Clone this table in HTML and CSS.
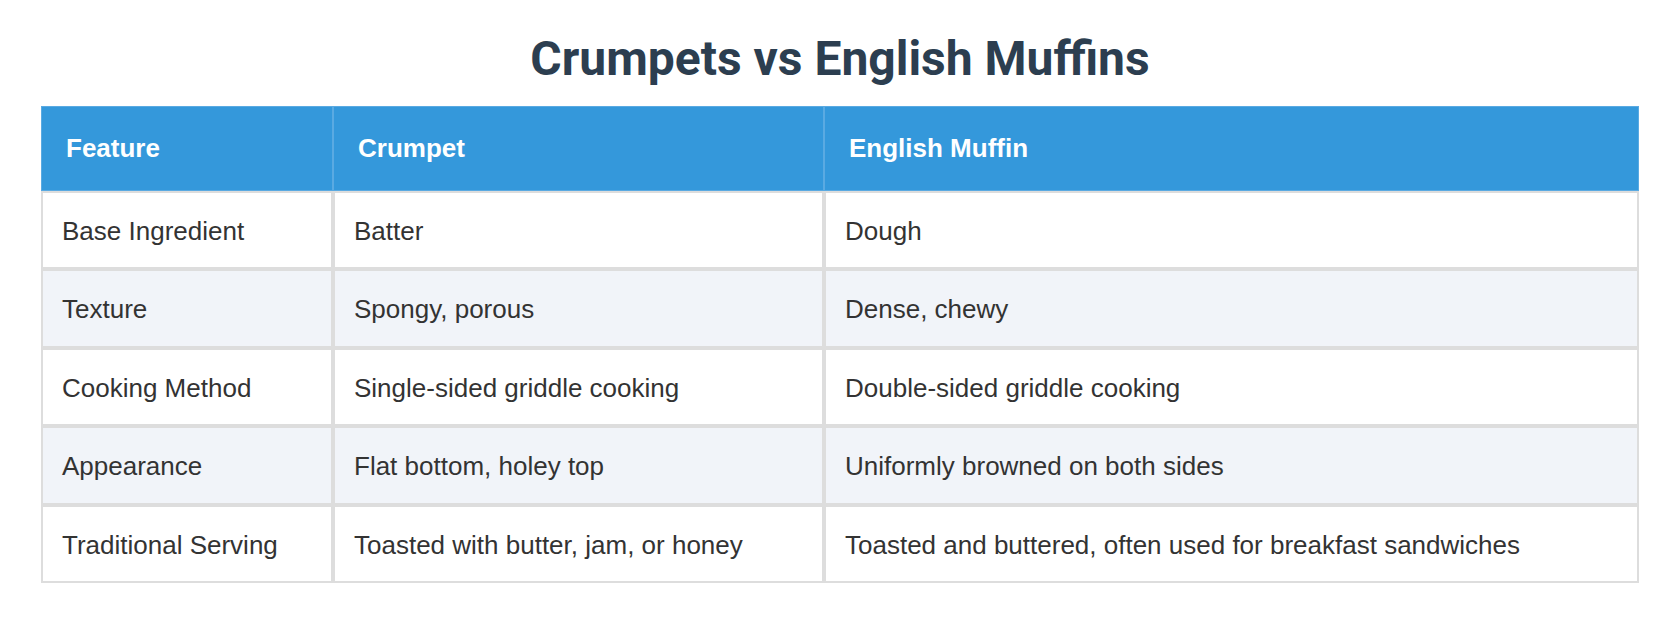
FILE: index.html
```html
<!DOCTYPE html>
<html lang="en">
<head>
<meta charset="utf-8">
<title>Crumpets vs English Muffins</title>
<link rel="stylesheet" href="styles.css">
</head>
<body>
<main class="page">
  <h1 class="title">Crumpets vs English Muffins</h1>
  <table class="compare">
    <colgroup>
      <col class="col-feature">
      <col class="col-crumpet">
      <col class="col-muffin">
    </colgroup>
    <thead>
      <tr>
        <th>Feature</th>
        <th>Crumpet</th>
        <th>English Muffin</th>
      </tr>
    </thead>
    <tbody>
      <tr>
        <td>Base Ingredient</td>
        <td>Batter</td>
        <td>Dough</td>
      </tr>
      <tr>
        <td>Texture</td>
        <td>Spongy, porous</td>
        <td>Dense, chewy</td>
      </tr>
      <tr>
        <td>Cooking Method</td>
        <td>Single-sided griddle cooking</td>
        <td>Double-sided griddle cooking</td>
      </tr>
      <tr>
        <td>Appearance</td>
        <td>Flat bottom, holey top</td>
        <td>Uniformly browned on both sides</td>
      </tr>
      <tr>
        <td>Traditional Serving</td>
        <td>Toasted with butter, jam, or honey</td>
        <td>Toasted and buttered, often used for breakfast sandwiches</td>
      </tr>
    </tbody>
  </table>
</main>
</body>
</html>
```

FILE: styles.css
```css
html, body {
  margin: 0;
  padding: 0;
  background: #ffffff;
}

.page {
  padding: 0 41px;
  font-family: "Liberation Sans", Arial, sans-serif;
  color: #333333;
}

.title {
  margin: 31px 0 20px;
  font-family: Roboto, "Liberation Sans", sans-serif;
  font-weight: 700;
  font-size: 48px;
  line-height: 55px;
  color: #2c3e50;
  text-align: center;
}

.compare {
  width: 100%;
  table-layout: fixed;
  border-collapse: separate;
  border-spacing: 0;
  font-size: 26px;
}

.col-feature { width: 292px; }
.col-crumpet { width: 491px; }
.col-muffin { width: auto; }

.compare th {
  background: #3498db;
  color: #ffffff;
  font-weight: 700;
  text-align: left;
  line-height: 30px;
  padding: 26px 24px 27px;
  border: 1px solid #5aaae2;
}

.compare td {
  line-height: 30px;
  padding: 23px 19px 21.4px;
  border: 2px solid #dddddd;
  background: #ffffff;
}

.compare tbody tr:nth-child(even) td {
  background: #f1f4f9;
}
```
